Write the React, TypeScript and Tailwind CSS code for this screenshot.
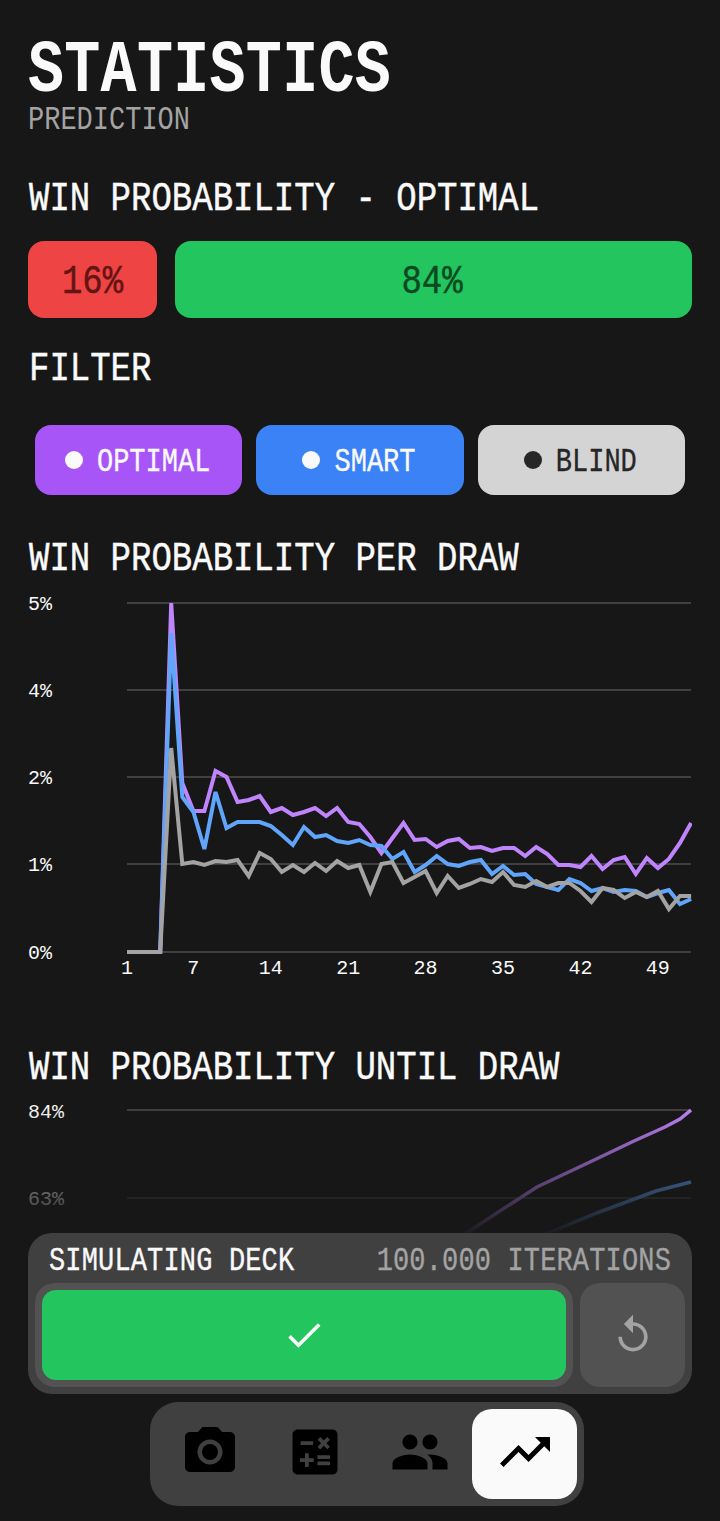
import React from "react";
import {
  MdCalculate,
  MdCheck,
  MdPeople,
  MdPhotoCamera,
  MdReplay,
  MdTrendingUp,
} from "react-icons/md";

const purple = [952, 952, 952, 952, 603, 783, 811, 811, 771, 777, 802, 800, 796, 812, 808, 815, 812, 808, 816, 808, 822, 824, 837, 853, 838, 823, 840, 839, 847, 841, 839, 848, 847, 851, 848, 848, 856, 847, 854, 865, 865, 867, 856, 869, 860, 857, 874, 858, 868, 859, 843, 823];
const blue = [952, 952, 952, 952, 633, 797, 812, 849, 792, 828, 822, 822, 822, 826, 835, 845, 827, 837, 835, 841, 843, 840, 845, 846, 859, 852, 872, 865, 856, 864, 866, 862, 860, 874, 866, 875, 874, 884, 887, 890, 879, 883, 891, 888, 892, 890, 891, 897, 893, 890, 904, 899];
const grey = [952, 952, 952, 952, 748, 864, 862, 865, 861, 862, 860, 876, 853, 859, 872, 865, 872, 863, 871, 861, 868, 865, 892, 864, 862, 883, 877, 871, 893, 876, 888, 884, 879, 882, 872, 885, 887, 881, 887, 883, 883, 891, 902, 888, 890, 898, 892, 897, 891, 909, 896, 896];

const toPoints = (ys: number[]) =>
  ys.map((y, i) => `${(127 + i * 11.06).toFixed(1)},${y}`).join(" ");

const perDrawY = [
  { label: "5%", y: 603 },
  { label: "4%", y: 690 },
  { label: "2%", y: 777 },
  { label: "1%", y: 864 },
  { label: "0%", y: 952 },
];
const perDrawX = [1, 7, 14, 21, 28, 35, 42, 49];

const Heading = ({ children, className = "" }: { children: React.ReactNode; className?: string }) => (
  <h2 className={`h-[36px] pl-[1px] flex items-center text-[34px] leading-[30px] [-webkit-text-stroke:0.4px_currentColor] ${className}`}>
    <span className="inline-block scale-y-[1.2]">{children}</span>
  </h2>
);

const FilterButton = ({ label, bg, dot, text }: { label: string; bg: string; dot: string; text: string }) => (
  <div className={`h-[70px] rounded-2xl flex items-center justify-center gap-[14px] ${bg} ${text}`}>
    <span className={`w-[18px] h-[18px] rounded-full -translate-x-[1px] ${dot}`} />
    <span className="inline-block pt-[4px] text-[27px] leading-[27px] -translate-x-[1px] scale-y-[1.2] [-webkit-text-stroke:0.3px_currentColor]">{label}</span>
  </div>
);

const NavItem = ({ icon, active }: { icon: React.ReactNode; active?: boolean }) => (
  <div className={`w-[105px] h-[90px] pb-[4px] rounded-[20px] flex items-center justify-center text-black ${active ? "bg-[#fafafa]" : ""}`}>
    {icon}
  </div>
);

const App = () => {
  return (
    <main className="relative h-[1521px] overflow-hidden bg-[#171717] text-[#fafafa] px-[28px] pt-[41px] font-['Liberation_Mono',monospace]">
      <h1 className="h-[60px] flex items-center text-[60px] leading-[48px] tracking-[0.3px] font-bold">
        <span className="inline-block scale-y-[1.22]">STATISTICS</span>
      </h1>
      <p className="mt-[6px] h-[28px] flex items-center text-[27px] leading-[22px] text-[#a3a3a3]">
        <span className="inline-block scale-y-[1.2]">PREDICTION</span>
      </p>

      <Heading className="mt-[46px]">WIN PROBABILITY - OPTIMAL</Heading>
      <div className="mt-[24px] flex gap-[18px] h-[77px] text-[34px] [-webkit-text-stroke:0.4px_currentColor]">
        <div className="w-[129px] rounded-2xl bg-[#ef4444] text-[#651414] flex items-center justify-center pt-[5px]">
          <span className="inline-block scale-y-[1.2]">16%</span>
        </div>
        <div className="flex-1 rounded-2xl bg-[#22c55e] text-[#0c4a22] flex items-center justify-center pt-[5px] pr-[3px]">
          <span className="inline-block scale-y-[1.2]">84%</span>
        </div>
      </div>

      <Heading className="mt-[33px]">FILTER</Heading>
      <div className="mt-[38px] px-[7px] grid grid-cols-3 gap-[14px]">
        <FilterButton label="OPTIMAL" bg="bg-[#a855f7]" dot="bg-[#fafafa]" text="text-[#fafafa]" />
        <FilterButton label="SMART" bg="bg-[#3b82f6]" dot="bg-[#fafafa]" text="text-[#fafafa]" />
        <FilterButton label="BLIND" bg="bg-[#d4d4d4]" dot="bg-[#262626]" text="text-[#262626]" />
      </div>

      <Heading className="mt-[46px]">WIN PROBABILITY PER DRAW</Heading>
      <svg className="mt-[13px] block [-webkit-text-stroke:0.3px_currentColor] text-[#fafafa]" width={664} height={400} viewBox="28 590 664 400" fill="none">
        {perDrawY.map((t) => (
          <g key={t.label}>
            <line x1={127} x2={691} y1={t.y} y2={t.y} stroke="#404040" strokeWidth={2} />
            <text x={28} y={t.y + 7} fill="#fafafa" fontSize={20}>{t.label}</text>
          </g>
        ))}
        {perDrawX.map((n) => (
          <text key={n} x={127 + (n - 1) * 11.06} y={974} fill="#fafafa" fontSize={20} textAnchor="middle">{n}</text>
        ))}
        <polyline points={toPoints(purple)} stroke="#c084fc" strokeWidth={4} />
        <polyline points={toPoints(blue)} stroke="#60a5fa" strokeWidth={4} />
        <polyline points={toPoints(grey)} stroke="#a3a3a3" strokeWidth={4} />
      </svg>

      <Heading className="mt-[60px]">WIN PROBABILITY UNTIL DRAW</Heading>
      <svg className="mt-[14px] block [-webkit-text-stroke:0.3px_currentColor] text-[#fafafa]" width={664} height={140} viewBox="28 1100 664 140" fill="none">
        <line x1={127} x2={691} y1={1110} y2={1110} stroke="#404040" strokeWidth={2} />
        <line x1={127} x2={691} y1={1198} y2={1198} stroke="#404040" strokeWidth={2} />
        <text x={28} y={1118} fill="#fafafa" fontSize={20}>84%</text>
        <text x={28} y={1205} fill="#fafafa" fontSize={20}>63%</text>
        <polyline points="691,1110 680,1119 665,1127 634,1141 590,1162 537,1187 500,1211 459,1238" stroke="#c084fc" strokeWidth={3.5} />
        <polyline points="691,1182 656,1191 597,1213 546,1234 525,1244" stroke="#60a5fa" strokeWidth={3.5} />
      </svg>

      <div className="absolute inset-x-0 bottom-0 h-[416px] bg-linear-to-b from-transparent to-[#171717] to-[32%]" />

      <div className="absolute inset-x-[28px] bottom-[15px] flex flex-col items-center gap-[8px]">
        <div className="w-full rounded-[24px] bg-[#404040] p-[7px]">
          <div className="h-[43px] px-[14px] flex items-center justify-between text-[27px] leading-[22px] tracking-[0.15px] [-webkit-text-stroke:0.3px_currentColor]">
            <span className="inline-block scale-y-[1.2]">SIMULATING DECK</span>
            <span className="inline-block scale-y-[1.2] text-[#a3a3a3]">100.000 ITERATIONS</span>
          </div>
          <div className="flex gap-[7px] h-[104px]">
            <div className="flex-1 rounded-[20px] bg-[#525252] p-[7px]">
              <div className="h-full rounded-[14px] bg-[#22c55e] flex items-center justify-center text-[#fafafa]">
                <MdCheck size={44} />
              </div>
            </div>
            <div className="w-[105px] rounded-[20px] bg-[#525252] flex items-center justify-center text-[#a3a3a3]">
              <MdReplay size={44} />
            </div>
          </div>
        </div>
        <nav className="ml-[14px] flex rounded-[28px] bg-[#404040] p-[7px]">
          <NavItem icon={<MdPhotoCamera size={60} />} />
          <NavItem icon={<MdCalculate size={60} />} />
          <NavItem icon={<MdPeople size={60} />} />
          <NavItem icon={<MdTrendingUp size={60} />} active />
        </nav>
      </div>
    </main>
  );
};

export default App;
